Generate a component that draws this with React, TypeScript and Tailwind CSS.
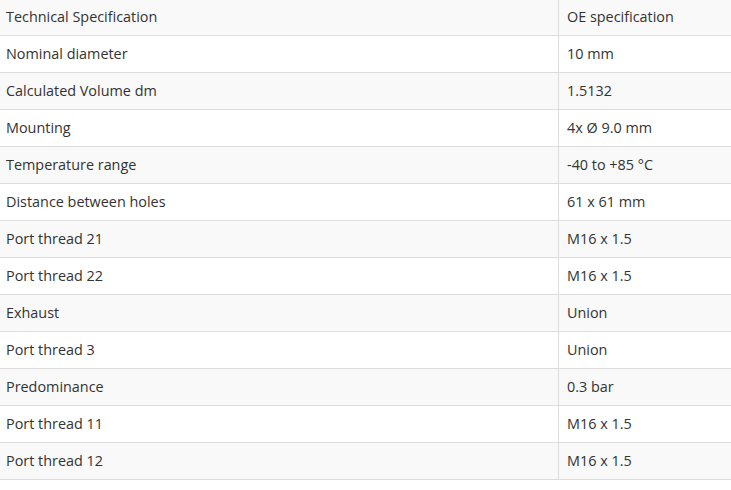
const rows: [string, string][] = [
  ["Technical Specification", "OE specification"],
  ["Nominal diameter", "10 mm"],
  ["Calculated Volume dm", "1.5132"],
  ["Mounting", "4x Ø 9.0 mm"],
  ["Temperature range", "-40 to +85 °C"],
  ["Distance between holes", "61 x 61 mm"],
  ["Port thread 21", "M16 x 1.5"],
  ["Port thread 22", "M16 x 1.5"],
  ["Exhaust", "Union"],
  ["Port thread 3", "Union"],
  ["Predominance", "0.3 bar"],
  ["Port thread 11", "M16 x 1.5"],
  ["Port thread 12", "M16 x 1.5"],
]

export default function App() {
  return (
    <div className="w-[731px] h-[490px] overflow-hidden bg-white">
      <div className="-mt-px text-[14.4px] text-[#333] [font-family:'Open_Sans',sans-serif]">
        {rows.map(([label, value], i) => (
          <div
            key={i}
            className={`grid grid-cols-[559px_1fr] h-[37px] border-b border-[#ddd] ${
              i % 2 === 0 ? "bg-[#f9f9f9]" : "bg-white"
            }`}
          >
            <div className="flex items-center pl-[6px] pb-px border-r border-[#ddd]">{label}</div>
            <div className="flex items-center pl-[8px] pb-px">{value}</div>
          </div>
        ))}
      </div>
    </div>
  )
}
